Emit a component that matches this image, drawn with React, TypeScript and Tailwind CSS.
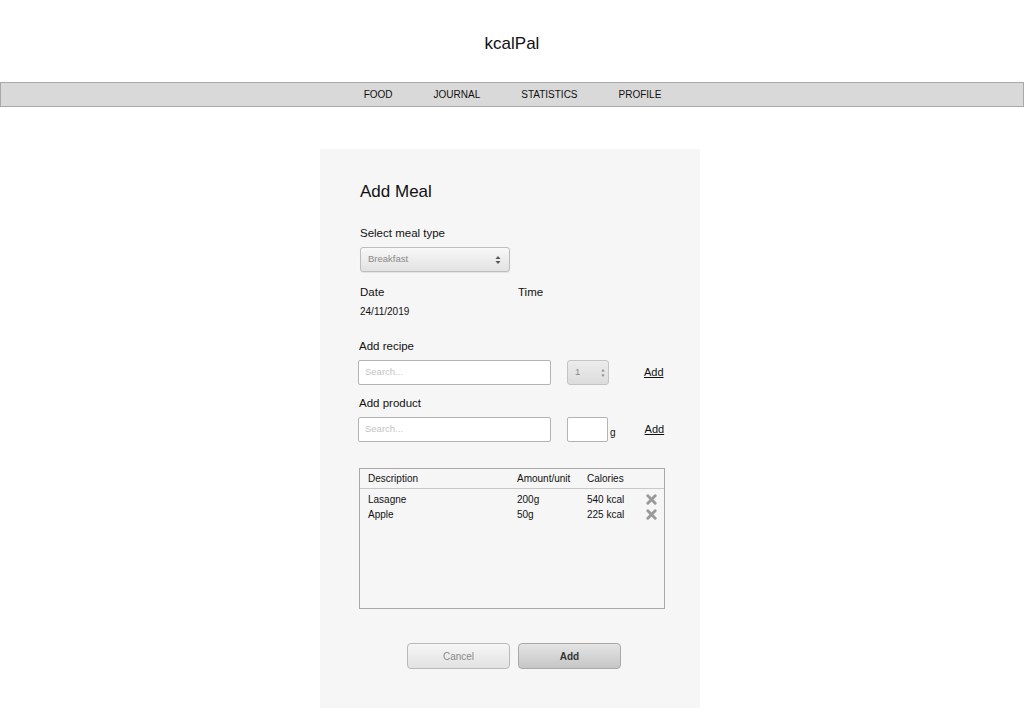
import { ReactNode } from "react";

const font = { fontFamily: '"Liberation Sans", Arial, sans-serif' };

const navItems = ["FOOD", "JOURNAL", "STATISTICS", "PROFILE"];

const rows = [
  { name: "Lasagne", amount: "200g", kcal: "540 kcal" },
  { name: "Apple", amount: "50g", kcal: "225 kcal" },
];

function CrossIcon() {
  return (
    <svg width="11" height="11" viewBox="0 0 12 12">
      <path d="M2 2 L10 10 M10 2 L2 10" stroke="#9a9a9a" strokeWidth="3.2" strokeLinecap="round" />
    </svg>
  );
}

function Label({ children }: { children: ReactNode }) {
  return <div className="text-[11.5px] leading-[15px] text-[#111]">{children}</div>;
}

function SearchInput() {
  return (
    <div className="w-[193px] h-[25px] bg-white border border-[#b4b4b4] rounded-[2px] flex items-center px-[6px] text-[9.5px] text-[#c4c4c4]">
      Search...
    </div>
  );
}

export default function App() {
  return (
    <div className="min-h-[728px] bg-white text-[#111]" style={font}>
      {/* Header */}
      <div className="h-[82px] flex items-center justify-center text-[17px] pt-[5px]">kcalPal</div>

      {/* Nav */}
      <div className="h-[25px] bg-[#d9d9d9] border border-[#a9a9a9] flex items-center justify-center gap-[41px] text-[10px] text-[#111] pl-[1px]">
        {navItems.map((n) => (
          <span key={n}>{n}</span>
        ))}
      </div>

      {/* Card */}
      <div className="w-[380px] ml-[320px] mt-[42px] bg-[#f6f6f6] pt-[33px] pb-[39px] pl-[38px] pr-[35px]">
        <div className="ml-[2px] text-[17px] leading-[20px]">Add Meal</div>

        <div className="ml-[2px] mt-[24px]">
          <Label>Select meal type</Label>
          <div className="mt-[6px] w-[150px] h-[25px] rounded-[3px] border border-[#bdbdbd] bg-gradient-to-b from-[#f8f8f8] to-[#e2e2e2] shadow-[0_1px_1px_rgba(0,0,0,0.08)] flex items-center justify-between pl-[7px] pr-[8px]">
            <span className="text-[9.5px] text-[#8a8a8a]">Breakfast</span>
            <svg width="6" height="10" viewBox="0 0 6 10">
              <path d="M3 1 L5.5 4 H0.5 Z M3 9 L5.5 6 H0.5 Z" fill="#555" />
            </svg>
          </div>
        </div>

        <div className="ml-[2px] mt-[13px] flex">
          <div className="w-[158px]">
            <Label>Date</Label>
            <div className="mt-[5px] text-[10px] leading-[13px]">24/11/2019</div>
          </div>
          <Label>Time</Label>
        </div>

        <div className="ml-[1px] mt-[21px]">
          <Label>Add recipe</Label>
        </div>
        <div className="mt-[6px] flex items-center">
          <SearchInput />
          <div className="ml-[16px] w-[42px] h-[25px] rounded-[3px] border border-[#c4c4c4] bg-gradient-to-b from-[#ececec] to-[#dcdcdc] flex items-center justify-between pl-[7px] pr-[3px]">
            <span className="text-[9.5px] text-[#888]">1</span>
            <svg width="4" height="10" viewBox="0 0 4 10">
              <path d="M2 1 L3.5 3.5 H0.5 Z M2 9 L3.5 6.5 H0.5 Z" fill="#888" />
            </svg>
          </div>
          <span className="ml-[35px] text-[11px] underline">Add</span>
        </div>

        <div className="ml-[1px] mt-[11px]">
          <Label>Add product</Label>
        </div>
        <div className="mt-[6px] flex items-center">
          <SearchInput />
          <div className="ml-[16px] w-[41px] h-[25px] bg-white border border-[#b4b4b4] rounded-[2px]" />
          <span className="ml-[2px] mt-[6px] text-[10px]">g</span>
          <span className="ml-[29px] text-[11px] underline">Add</span>
        </div>

        {/* Table */}
        <div className="ml-[1px] mt-[26px] w-[306px] h-[141px] border border-[#a9a9a9] text-[10px]">
          <div className="h-[20px] border-b border-[#c8c8c8] flex items-center pl-[8px]">
            <span className="w-[149px]">Description</span>
            <span className="w-[70px]">Amount/unit</span>
            <span>Calories</span>
          </div>
          <div className="pt-[3px]">
            {rows.map((r) => (
              <div key={r.name} className="h-[15px] flex items-center pl-[8px]">
                <span className="w-[149px]">{r.name}</span>
                <span className="w-[70px]">{r.amount}</span>
                <span className="w-[59px]">{r.kcal}</span>
                <CrossIcon />
              </div>
            ))}
          </div>
        </div>

        {/* Buttons */}
        <div className="mt-[34px] flex justify-center gap-[8px] pl-[5px]">
          <button className="w-[103px] h-[26px] rounded-[4px] border border-[#b9b9b9] bg-gradient-to-b from-[#f6f6f6] to-[#e2e2e2] text-[10px] text-[#8a8a8a]">
            Cancel
          </button>
          <button className="w-[103px] h-[26px] rounded-[4px] border border-[#a9a9a9] bg-gradient-to-b from-[#e4e4e4] to-[#c6c6c6] text-[10px] font-bold text-[#333]">
            Add
          </button>
        </div>
      </div>
    </div>
  );
}
